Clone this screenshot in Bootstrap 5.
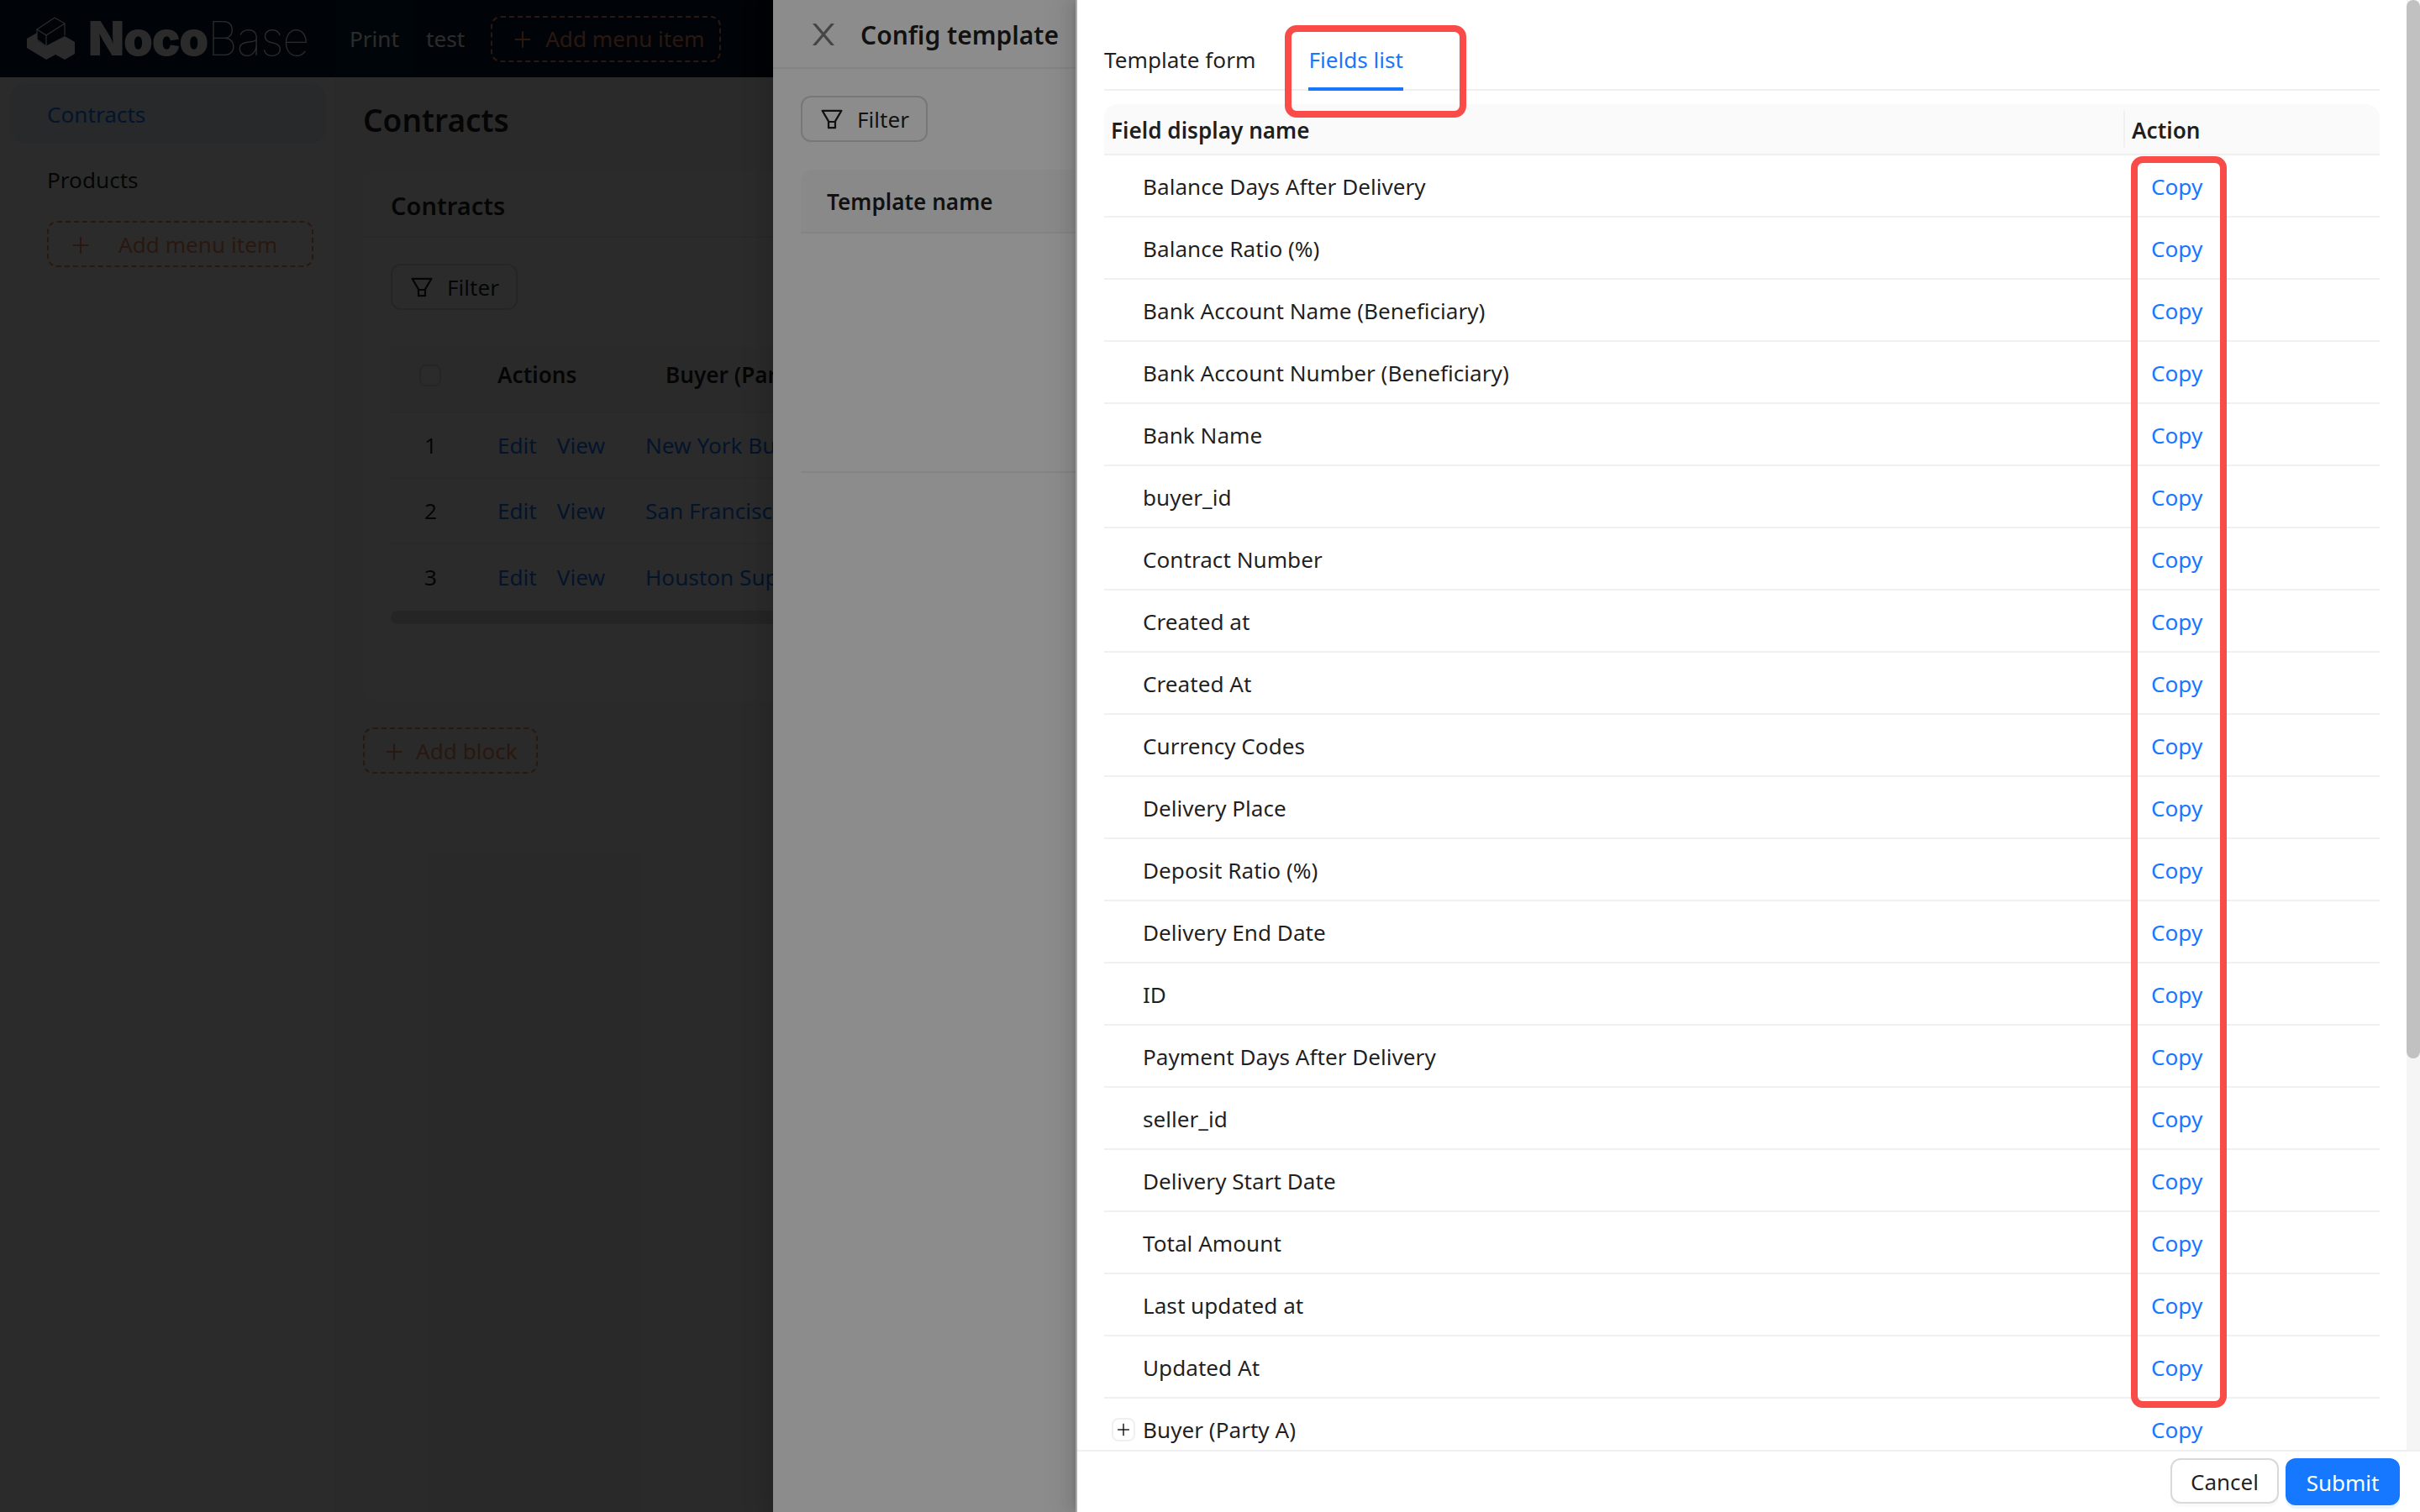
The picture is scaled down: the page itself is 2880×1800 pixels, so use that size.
<!DOCTYPE html>
<html lang="en"><head><meta charset="utf-8"><title>Config template</title>
<link href="https://cdn.jsdelivr.net/npm/bootstrap@5.3.0/dist/css/bootstrap.min.css" rel="stylesheet">
<style>
:root{--ink:rgba(0,0,0,.88);--brand:#1677ff;--line:#f0f0f0;--designer:#f18b62}
html,body{width:2880px;height:1800px;overflow:hidden;margin:0}
body{background:#f5f5f5;font-family:"Noto Sans","Open Sans",sans-serif;font-size:26.15px;color:var(--ink);position:relative}
.ico{fill:currentColor;flex:none}
/* base page */
.topbar{height:92px;background:#001529;color:#fff}
.logo-box{width:399px;padding-left:30px}
.logo-word{font-family:Inter,sans-serif;font-size:56px;line-height:1;letter-spacing:-1.2px;margin-left:-1px}
.logo-word b{font-weight:900}.logo-word span{font-weight:100;margin-left:0}
.top-item{height:92px;line-height:92px;padding:0 17px}
.top-item.on{background:#05223c;width:91px}
.dash-btn{border:2px dashed var(--designer);border-radius:12px;color:var(--designer);height:55px}
.top-add{width:274px;margin-left:14px;padding:2px 0 0 24px;gap:15px}
.side{width:400px;height:1708px;background:#fff;padding:8px 10px 0 12px;flex:none;border-right:2px solid rgba(0,0,0,.06)}
.side-on{height:70px;border-radius:16px;background:#e6f4ff;color:var(--brand);padding-left:44px;line-height:72px}
.side-off{height:70px;margin-top:10px;padding-left:44px;line-height:68px}
.side-add{width:317px;margin:13px 0 0 44px;padding:2px 0 0 26px;gap:33px}
.page{padding-left:32px;flex:1;min-width:0}
.page-h{font-size:37px;font-weight:600;line-height:102px;height:110px;margin:0}
.blockcard{background:#fff;border-radius:16px;height:632px;width:2400px}
.blockcard-h{height:81px;line-height:85px;padding-left:33px;font-size:29px;font-weight:600;border-bottom:2px solid var(--line)}
.filter-b{width:151px;height:55px;border:2px solid #d9d9d9;border-radius:12px;background:#fff;gap:16px;padding:2px 0 0 21px}
.filter-b .ico{margin-top:-2px}
.blockcard .filter-b{margin:31px 0 44px 33px}
.dt{margin-left:33px;width:1800px;table-layout:fixed;border-collapse:collapse}
.dt th{height:78px;background:#fafafa;font-weight:600;border-bottom:2px solid var(--line);padding:0 0 9px}
.dt td{height:78px;border-bottom:2px solid var(--line);padding:2px 0 0}
.dt tr:last-child td{border-bottom:0}
.dt a{color:var(--brand);text-decoration:none}
.dt .c1{width:127px;padding-left:34px}.dt td.c1{padding-left:40px}.dt .c2{width:176px}
.dt th.c3{padding-left:24px}
.act-links{gap:24px}
.chk{display:block;width:26px;height:26px;border:2px solid #d9d9d9;border-radius:8px;background:#fff}
.hbar{margin:2px 0 0 33px;height:16px;width:1800px;border-radius:8px;background:#dcdcdc}
.add-block{width:208px;margin-top:32px;padding:2px 0 0 23px;gap:14px}
/* masks + drawers */
.veil{position:absolute;inset:0;background:rgba(0,0,0,.83)}
.veil2{position:absolute;inset:0;background:rgba(0,0,0,.45)}
.drawer1{position:absolute;top:0;bottom:0;left:920px;right:0;background:#fff;box-shadow:-6px 0 16px rgba(0,0,0,.08),-9px 0 28px 8px rgba(0,0,0,.05)}
.d1-head{height:82px;border-bottom:2px solid var(--line);padding:3px 0 0 42px;gap:26px}
.d1-title{font-size:30px;font-weight:600;margin-top:0}
.d1-head .ico{margin-top:-2px;color:rgba(0,0,0,.5)}
.drawer1 .filter-b{margin:32px 0 33px 33px}
.tpl-h{margin-left:33px;height:76px;line-height:76px;background:#fafafa;border-radius:16px 16px 0 0;border-bottom:2px solid var(--line);padding-left:31px;font-weight:600}
.tpl-empty{margin-left:33px;height:285px;border-bottom:2px solid var(--line)}
.drawer2{position:absolute;top:0;bottom:0;left:1280px;right:0;background:#fff;border-left:2px solid #a9a9a9;box-shadow:-6px 0 16px rgba(0,0,0,.08),-3px 0 6px -4px rgba(0,0,0,.12),-9px 0 28px 8px rgba(0,0,0,.05)}
.d2-main{height:1726px;overflow:hidden}
.d2-scroll{flex:1;min-width:0;padding:0 32px;overflow:hidden}
.tabrow{height:108px;border-bottom:2px solid var(--line);gap:63px;padding-top:52px;margin-bottom:16px;line-height:38px}
.tabrow .on{color:var(--brand);border-bottom:4px solid var(--brand);height:56px;flex:none}
.fld{width:100%;table-layout:fixed;border-collapse:separate;border-spacing:0}
.fld th{height:61px;background:#fafafa;font-weight:600;border-bottom:2px solid var(--line);padding:4px 8px 0;position:relative}
.fld th:first-child{border-top-left-radius:16px}.fld th:last-child{border-top-right-radius:16px;width:305px;padding-left:10px}
.fld th:last-child::before{content:"";position:absolute;left:0;top:8px;bottom:8px;width:2px;background:var(--line)}
.fld td{height:74px;border-bottom:2px solid var(--line);padding:4px 0 0 46px;white-space:nowrap}
.fld td:last-child{padding-left:33px}
.fld a{color:var(--brand);text-decoration:none}
.fld td.has-exp{padding-left:9px}
.exp{width:28px;height:28px;border:2px solid var(--line);border-radius:8px;margin-right:9px;vertical-align:middle;background:#fff;position:relative;top:-3px}
.track{width:16px;background:#f5f5f5;flex:none}
.thumb{height:1260px;background:#c1c1c1;border-radius:8px}
.d2-foot{height:74px;border-top:2px solid var(--line);padding:8px 24px 0 0;gap:8px;justify-content:flex-end}
.f-cancel{width:129px;height:54px;border:2px solid #d9d9d9;border-radius:12px;background:#fff;box-shadow:0 4px 0 rgba(0,0,0,.02);padding:2px 0 0;font-size:26px;color:var(--ink)}
.f-submit{width:136px;height:56px;border:0;border-radius:12px;background:var(--brand);color:#fff;box-shadow:0 4px 0 rgba(5,145,255,.1);padding:2px 0 0;font-size:26px}
/* review annotations drawn over the page */
.note{position:absolute;border:8px solid #f94c48;border-radius:14px;pointer-events:none}
.note-a{left:247px;top:30px;width:216px;height:110px}
.note-b{left:1254px;top:186px;width:114px;height:1490px}
</style></head><body>

<nav class="topbar d-flex align-items-center">
 <div class="logo-box d-flex align-items-center">
  <svg width="60" height="54" viewBox="30 19 60 54" class="me-3"><path fill="#fff" d="M32 46l12-7v9l10 7 23-12 12 7v14l-12 7-11-6-11 6-23-14z"/><path fill="none" stroke="#fff" stroke-width="1.2" d="M65 21l12 7v14M65 21L44 35l11 7 22-14M44 35v12l11 8V42"/></svg>
  <div class="logo-word"><b>Noco</b><span>Base</span></div>
 </div>
 <div class="top-item on">Print</div>
 <div class="top-item">test</div>
 <div class="dash-btn top-add d-flex align-items-center"><svg class="ico" width="24" height="24" viewBox="64 64 896 896"><path d="M482 152h60q8 0 8 8v704q0 8-8 8h-60q-8 0-8-8V160q0-8 8-8z"/><path d="M176 474h672q8 0 8 8v60q0 8-8 8H176q-8 0-8-8v-60q0-8 8-8z"/></svg>Add menu item</div>
</nav>
<div class="d-flex">
 <aside class="side">
  <div class="side-on">Contracts</div>
  <div class="side-off">Products</div>
  <div class="dash-btn side-add d-flex align-items-center"><svg class="ico" width="24" height="24" viewBox="64 64 896 896"><path d="M482 152h60q8 0 8 8v704q0 8-8 8h-60q-8 0-8-8V160q0-8 8-8z"/><path d="M176 474h672q8 0 8 8v60q0 8-8 8H176q-8 0-8-8v-60q0-8 8-8z"/></svg>Add menu item</div>
 </aside>
 <main class="page">
  <h1 class="page-h">Contracts</h1>
  <section class="blockcard">
   <div class="blockcard-h">Contracts</div>
   <div class="filter-b d-flex align-items-center"><svg class="ico" width="28" height="28" viewBox="64 64 896 896"><path d="M880.1 154H143.9c-24.5 0-39.8 26.7-27.5 48L349 597.4V838c0 17.7 14.2 32 31.8 32h262.4c17.6 0 31.8-14.3 31.8-32V597.4L907.7 202c12.2-21.3-3.1-48-27.6-48zM603.4 798H420.6V642h182.9v156zm9.6-236.6l-9.5 16.6h-183l-9.5-16.6L212.7 226h598.6L613 561.4z"/></svg>Filter</div>
   <table class="dt">
    <thead><tr><th class="c1"><span class="chk"></span></th><th class="c2">Actions</th><th class="c3">Buyer (Party A)</th></tr></thead>
    <tbody>
     <tr><td class="c1">1</td><td class="c2"><div class="act-links d-flex"><a href="#">Edit</a><a href="#">View</a></div></td><td><a href="#">New York Buyer Inc.</a></td></tr>
     <tr><td class="c1">2</td><td class="c2"><div class="act-links d-flex"><a href="#">Edit</a><a href="#">View</a></div></td><td><a href="#">San Francisco Trading</a></td></tr>
     <tr><td class="c1">3</td><td class="c2"><div class="act-links d-flex"><a href="#">Edit</a><a href="#">View</a></div></td><td><a href="#">Houston Supply Co.</a></td></tr>
    </tbody>
   </table>
   <div class="hbar"></div>
  </section>
  <div class="dash-btn add-block d-flex align-items-center"><svg class="ico" width="24" height="24" viewBox="64 64 896 896"><path d="M482 152h60q8 0 8 8v704q0 8-8 8h-60q-8 0-8-8V160q0-8 8-8z"/><path d="M176 474h672q8 0 8 8v60q0 8-8 8H176q-8 0-8-8v-60q0-8 8-8z"/></svg>Add block</div>
 </main>
</div>
<div class="veil"></div>

<div class="drawer1">
 <div class="d1-head d-flex align-items-center"><svg class="ico" width="36" height="36" viewBox="64 64 896 896"><path d="M563.8 512l262.5-312.9c4.4-5.2.7-13.1-6.1-13.1h-79.8c-4.7 0-9.2 2.1-12.3 5.7L511.6 449.8 295.1 191.7c-3-3.6-7.5-5.7-12.3-5.7H203c-6.8 0-10.5 7.9-6.1 13.1L459.4 512 196.9 824.9A7.95 7.95 0 0 0 203 838h79.8c4.7 0 9.2-2.1 12.3-5.7l216.5-258.1 216.5 258.1c3 3.6 7.5 5.7 12.3 5.7h79.8c6.8 0 10.5-7.9 6.1-13.1L563.8 512z"/></svg><div class="d1-title">Config template</div></div>
 <div class="filter-b d-flex align-items-center"><svg class="ico" width="28" height="28" viewBox="64 64 896 896"><path d="M880.1 154H143.9c-24.5 0-39.8 26.7-27.5 48L349 597.4V838c0 17.7 14.2 32 31.8 32h262.4c17.6 0 31.8-14.3 31.8-32V597.4L907.7 202c12.2-21.3-3.1-48-27.6-48zM603.4 798H420.6V642h182.9v156zm9.6-236.6l-9.5 16.6h-183l-9.5-16.6L212.7 226h598.6L613 561.4z"/></svg>Filter</div>
 <div class="tpl-h">Template name</div>
 <div class="tpl-empty"></div>
 <div class="veil2"></div>
</div>

<div class="drawer2">
 <div class="d2-main d-flex">
  <div class="d2-scroll">
   <div class="tabrow d-flex"><div>Template form</div><div class="on">Fields list</div></div>
   <table class="fld">
    <thead><tr><th>Field display name</th><th>Action</th></tr></thead>
    <tbody id="rows">
<tr><td>Balance Days After Delivery</td><td><a href="#">Copy</a></td></tr>
<tr><td>Balance Ratio (%)</td><td><a href="#">Copy</a></td></tr>
<tr><td>Bank Account Name (Beneficiary)</td><td><a href="#">Copy</a></td></tr>
<tr><td>Bank Account Number (Beneficiary)</td><td><a href="#">Copy</a></td></tr>
<tr><td>Bank Name</td><td><a href="#">Copy</a></td></tr>
<tr><td>buyer_id</td><td><a href="#">Copy</a></td></tr>
<tr><td>Contract Number</td><td><a href="#">Copy</a></td></tr>
<tr><td>Created at</td><td><a href="#">Copy</a></td></tr>
<tr><td>Created At</td><td><a href="#">Copy</a></td></tr>
<tr><td>Currency Codes</td><td><a href="#">Copy</a></td></tr>
<tr><td>Delivery Place</td><td><a href="#">Copy</a></td></tr>
<tr><td>Deposit Ratio (%)</td><td><a href="#">Copy</a></td></tr>
<tr><td>Delivery End Date</td><td><a href="#">Copy</a></td></tr>
<tr><td>ID</td><td><a href="#">Copy</a></td></tr>
<tr><td>Payment Days After Delivery</td><td><a href="#">Copy</a></td></tr>
<tr><td>seller_id</td><td><a href="#">Copy</a></td></tr>
<tr><td>Delivery Start Date</td><td><a href="#">Copy</a></td></tr>
<tr><td>Total Amount</td><td><a href="#">Copy</a></td></tr>
<tr><td>Last updated at</td><td><a href="#">Copy</a></td></tr>
<tr><td>Updated At</td><td><a href="#">Copy</a></td></tr>
<tr><td class="has-exp"><span class="exp d-inline-flex align-items-center justify-content-center"><svg class="ico" width="18" height="18" viewBox="64 64 896 896"><path d="M482 152h60q8 0 8 8v704q0 8-8 8h-60q-8 0-8-8V160q0-8 8-8z"/><path d="M176 474h672q8 0 8 8v60q0 8-8 8H176q-8 0-8-8v-60q0-8 8-8z"/></svg></span>Buyer (Party A)</td><td><a href="#">Copy</a></td></tr>
    </tbody>
   </table>
  </div>
  <div class="track"><div class="thumb"></div></div>
 </div>
 <div class="d2-foot d-flex"><button class="btn f-cancel">Cancel</button><button class="btn f-submit">Submit</button></div>
 <div class="note note-a"></div>
 <div class="note note-b"></div>
</div>
<script src="https://cdn.jsdelivr.net/npm/bootstrap@5.3.0/dist/js/bootstrap.bundle.min.js"></script>
</body></html>
